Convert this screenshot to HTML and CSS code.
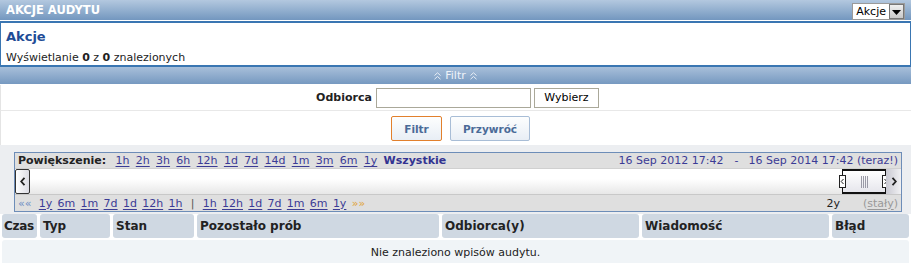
FILE: index.html
```
<!DOCTYPE html>
<html lang="pl">
<head>
<meta charset="utf-8">
<title>Akcje audytu</title>
<link rel="stylesheet" href="styles.css">
</head>
<body>
<div class="header">
  <span class="title">AKCJE AUDYTU</span>
  <div class="select"><span class="sel-text">Akcje</span><span class="sel-btn"><svg width="9" height="5" viewBox="0 0 9 5"><path d="M0 0h9L4.5 5z" fill="#000"/></svg></span></div>
</div>
<div class="panel">
  <div class="heading">Akcje</div>
  <div class="count">Wyświetlanie <b>0</b> z <b>0</b> znalezionych</div>
</div>
<div class="filterbar">
  <svg class="dchev" width="7" height="8" viewBox="0 0 7 8"><path d="M0.5 3.5L3.5 0.8L6.5 3.5M0.5 7.2L3.5 4.5L6.5 7.2" fill="none" stroke="#e8eef6" stroke-width="1"/></svg>
  <span>Filtr</span>
  <svg class="dchev" width="7" height="8" viewBox="0 0 7 8"><path d="M0.5 3.5L3.5 0.8L6.5 3.5M0.5 7.2L3.5 4.5L6.5 7.2" fill="none" stroke="#e8eef6" stroke-width="1"/></svg>
</div>
<div class="filter-row">
  <label class="flabel">Odbiorca</label>
  <input class="finput" type="text">
  <button class="fbtn">Wybierz</button>
</div>
<div class="action-row">
  <button class="abtn primary">Filtr</button>
  <button class="abtn">Przywróć</button>
</div>
<div class="tl-wrap">
  <div class="timeline">
    <div class="tl-top">
      <div class="zoom">
        <span class="zlabel">Powiększenie:</span>
        <a>1h</a><a>2h</a><a>3h</a><a>6h</a><a>12h</a><a>1d</a><a>7d</a><a>14d</a><a>1m</a><a>3m</a><a>6m</a><a>1y</a>
        <span class="all">Wszystkie</span>
      </div>
      <div class="range">16 Sep 2012 17:42<span class="dash">-</span>16 Sep 2014 17:42 (teraz!)</div>
    </div>
    <div class="tl-mid">
      <div class="arrow left">
        <svg width="6" height="9" viewBox="0 0 6 9"><path d="M4.5 0.8L1.2 4.5L4.5 8.2" fill="none" stroke="#222" stroke-width="1.8"/></svg>
      </div>
      <div class="track"></div>
      <div class="handle">
        <span class="grip gl"><svg width="5" height="7" viewBox="0 0 5 7"><path d="M3.5 1L1.2 3.5L3.5 6" fill="none" stroke="#222" stroke-width="1"/></svg></span>
        <span class="bars"><i></i><i></i><i></i><i></i></span>
        <span class="grip gr"><svg width="5" height="7" viewBox="0 0 5 7"><path d="M1.5 1L3.8 3.5L1.5 6" fill="none" stroke="#222" stroke-width="1"/></svg></span>
      </div>
      <div class="arrow right">
        <svg width="6" height="9" viewBox="0 0 6 9"><path d="M1.5 0.8L4.8 4.5L1.5 8.2" fill="none" stroke="#222" stroke-width="1.8"/></svg>
      </div>
    </div>
    <div class="tl-bot">
      <div class="pan">
        <span class="lq">««</span>
        <a>1y</a><a>6m</a><a>1m</a><a>7d</a><a>1d</a><a>12h</a><a>1h</a>
        <span class="sep">|</span>
        <a>1h</a><a>12h</a><a>1d</a><a>7d</a><a>1m</a><a>6m</a><a>1y</a>
        <span class="rq">»»</span>
      </div>
      <div class="span-info"><span class="dur">2y</span><span class="fixed">(<u>stały</u>)</span></div>
    </div>
  </div>
</div>
<div class="grid">
  <div class="th">Czas</div>
  <div class="th">Typ</div>
  <div class="th">Stan</div>
  <div class="th">Pozostało prób</div>
  <div class="th">Odbiorca(y)</div>
  <div class="th">Wiadomość</div>
  <div class="th">Błąd</div>
  <div class="empty">Nie znaleziono wpisów audytu.</div>
</div>
</body>
</html>
```
FILE: styles.css
```
* { box-sizing: border-box; }
body {
  margin: 0;
  width: 911px;
  font-family: "DejaVu Sans", Verdana, sans-serif;
  font-size: 11px;
  color: #222;
  background: #fff;
}
.header {
  height: 20px;
  background: linear-gradient(#b3c8df, #7397bf);
  display: flex;
  align-items: center;
  justify-content: space-between;
  padding: 0 6px 0 6px;
  margin-bottom: 1px;
}
.title {
  color: #fff;
  font-weight: bold;
  font-size: 11.5px;
}
.select {
  display: flex;
  height: 17px;
  margin-top: 2px;
  border: 1px solid #9a9a9a;
  background: #fff;
}
.sel-text {
  padding: 0 3px 0 3px;
  line-height: 15px;
  font-size: 11px;
  color: #000;
}
.sel-btn {
  width: 15px;
  background: linear-gradient(#f0f0f0, #c8c8c8);
  border: 1px solid #777;
  display: flex;
  align-items: center;
  justify-content: center;
  padding-top: 3px;
}
.panel {
  border: 1px solid #3a76b2;
  border-top-width: 2px;
  border-bottom-width: 0;
  height: 44px;
  padding: 5px 5px 0 5px;
}
.heading {
  font-size: 13px;
  font-weight: bold;
  color: #1f4c96;
  line-height: 17px;
}
.count {
  margin-top: 6px;
  line-height: 13px;
}
.filterbar {
  border-top: 2px solid #3a76b2;
  height: 19px;
  background: linear-gradient(#a8bfda, #7699c0);
  color: #eef3f9;
  display: flex;
  align-items: center;
  justify-content: center;
  gap: 4px;
  margin-bottom: 1px;
}
.filter-row {
  height: 26px;
  display: flex;
  align-items: center;
  justify-content: center;
  gap: 3px;
  padding-left: 3px;
  border-bottom: 1px solid #e8e8e8;
  border-left: 1px solid #e4e4e4;
}
.flabel {
  font-weight: bold;
  margin-right: 1px;
}
.finput {
  width: 155px;
  height: 20px;
  border: 1px solid #aaa899;
  margin: 0;
  padding: 0;
}
.fbtn {
  width: 65px;
  height: 20px;
  border: 1px solid #aaa899;
  background: #fff;
  font-family: inherit;
  font-size: 11px;
  color: #000;
  padding: 0;
  margin: 0;
}
.action-row {
  height: 34px;
  display: flex;
  align-items: flex-start;
  justify-content: center;
  gap: 8px;
  padding: 5px 0 0 9px;
  border-left: 1px solid #e4e4e4;
}
.abtn {
  height: 25px;
  width: 80px;
  border: 1px solid #a8bdd6;
  border-radius: 2px;
  background: linear-gradient(#fdfefe, #e8eef5);
  color: #4b6b98;
  font-family: inherit;
  font-weight: bold;
  font-size: 10.5px;
  padding: 0;
  margin: 0;
}
.abtn.primary {
  width: 51px;
  border-color: #e2802c;
}
.tl-wrap {
  background: #eceef1;
  padding: 7px 9px 2px 14px;
}
.timeline {
  border: 1px solid #6d8db8;
  background: #fff;
}
.tl-top, .tl-bot {
  height: 15px;
  background: #dfdfdf;
  display: flex;
  align-items: center;
  justify-content: space-between;
  padding: 0 3px;
}
.tl-bot { height: 16px; }
.zoom {
  display: flex;
  align-items: center;
  gap: 6.3px;
  white-space: nowrap;
}
.pan {
  display: flex;
  align-items: center;
  gap: 5.3px;
  white-space: nowrap;
}
.zlabel {
  font-weight: bold;
  font-size: 11px;
  color: #222;
  margin-right: 3px;
}
.tl-top a, .tl-bot a {
  color: #3b3b95;
  text-decoration: underline;
  text-underline-offset: 2px;
}
.all {
  font-weight: bold;
  color: #333391;
  font-size: 11px;
}
.range {
  color: #3b3b95;
  white-space: nowrap;
}
.dash { margin: 0 10px 0 11px; }
.tl-mid {
  height: 27px;
  display: flex;
  background: linear-gradient(#ffffff 40%, #e7e7e7);
  border-top: 1px solid #d0d0d0;
  border-bottom: 1px solid #c8c8c8;
}
.arrow {
  width: 15px;
  display: flex;
  align-items: center;
  justify-content: center;
}
.arrow.left {
  border: 1px solid #333;
  border-radius: 2px;
  background: linear-gradient(90deg, #ffffff, #dcdce4);
}
.arrow.right {
  background: linear-gradient(90deg, #c9c9d2, #f1f1f3);
}
.track { flex: 1; }
.handle {
  width: 44px;
  border: 1px solid #111;
  border-top-width: 2px;
  border-bottom-width: 2px;
  background: linear-gradient(#ffffff, #e6e6ec);
  display: flex;
  align-items: center;
  justify-content: space-between;
}
.grip {
  width: 7px;
  height: 13px;
  border: 1px solid #222;
  background: #fff;
  display: flex;
  align-items: center;
  justify-content: center;
}
.gl { margin-left: -4px; }
.gr { margin-right: -4px; }
.bars {
  display: flex;
  gap: 1px;
  height: 12px;
}
.bars i {
  display: block;
  width: 1px;
  background: #9a9aa6;
}
.lq { color: #6d8dc4; margin-right: 2px; }
.sep { color: #555; margin: 0 3px; }
.rq { color: #e0a43a; }
.span-info {
  display: flex;
  gap: 23px;
  white-space: nowrap;
}
.dur { color: #222; }
.fixed { color: #999; }
.fixed u { text-underline-offset: 2px; }
.grid {
  display: grid;
  grid-template-columns: 35px 70px 81px 242px 197px 187px 77px;
  column-gap: 3px;
  row-gap: 2px;
  padding: 0 2px;
}
.th {
  height: 24px;
  background: #cfd8e2;
  border-radius: 3px;
  font-weight: bold;
  font-size: 12px;
  display: flex;
  align-items: center;
  padding-left: 3px;
  white-space: nowrap;
  overflow: visible;
}
.th:first-child { padding-left: 2px; letter-spacing: -0.3px; }
.empty {
  grid-column: 1 / -1;
  height: 25px;
  background: #f0f4f7;
  border-radius: 3px;
  display: flex;
  align-items: center;
  justify-content: center;
}
```
